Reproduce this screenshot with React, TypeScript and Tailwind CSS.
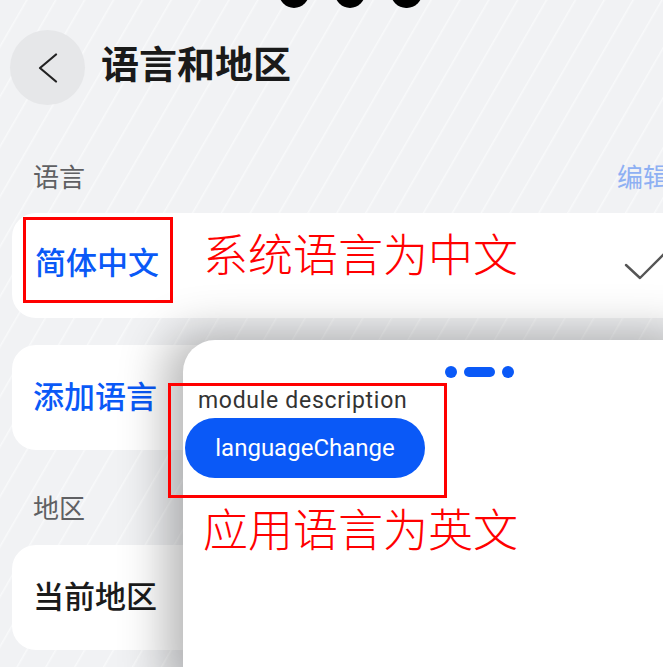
import React from 'react';

function BackIcon() {
  return (
    <svg width="20" height="30" viewBox="0 0 20 30" fill="none">
      <polyline
        points="18,1.5 2,15 18,28.5"
        stroke="#222"
        strokeWidth="2.2"
        strokeLinecap="round"
        strokeLinejoin="round"
      />
    </svg>
  );
}

function CheckIcon() {
  return (
    <svg width="46" height="32" viewBox="0 0 46 32" fill="none">
      <polyline
        points="4,15 18,28 46,0"
        stroke="#555"
        strokeWidth="2.4"
        strokeLinecap="round"
        strokeLinejoin="round"
      />
    </svg>
  );
}

function App() {
  return (
    <div className="relative w-[663px] h-[667px] overflow-hidden bg-[#f1f2f4] bg-[repeating-linear-gradient(120deg,#f1f2f4_0px,#f1f2f4_22px,#f8f9fa_23px,#f1f2f4_25px)] font-['Roboto','Noto_Sans_CJK_SC',sans-serif]">
      {/* top dots */}
      <div className="flex items-end gap-[26px] h-[8px] pl-[279px]">
        <div className="w-[30px] h-[30px] shrink-0 rounded-full bg-black" />
        <div className="w-[30px] h-[30px] shrink-0 rounded-full bg-black" />
        <div className="w-[31px] h-[30px] shrink-0 rounded-full bg-black" />
      </div>

      {/* header */}
      <div className="flex items-center mt-[22px] pl-[10px]">
        <div className="w-[75px] h-[75px] rounded-full bg-[#e6e7e9] flex items-center justify-center">
          <BackIcon />
        </div>
        <div className="ml-[16px] pb-[5px] text-[38px] leading-none font-bold text-[#1a1a1a]">
          语言和地区
        </div>
      </div>

      {/* language section */}
      <div className="flex justify-between w-[669px] mt-[60px] pl-[33px] text-[26px] leading-none">
        <span className="text-[#5f6063]">语言</span>
        <span className="text-[#8eb0f3]">编辑</span>
      </div>

      <div className="flex items-start ml-[12px] mt-[22px] w-[700px] h-[105px] rounded-[24px] bg-white pl-[11px]">
        <div className="mt-[4px] w-[150px] h-[86px] border-[3px] border-[#ff0000] flex items-center pl-[9px] pt-[7px] text-[31px] leading-none font-medium text-[#0a59f7]">
          简体中文
        </div>
        <div className="ml-[30px] mt-[21px] text-[45px] leading-none font-light text-[#ff0000]">
          系统语言为中文
        </div>
        <div className="ml-[104px] mt-[37px]">
          <CheckIcon />
        </div>
      </div>

      <div className="flex items-center ml-[12px] mt-[27px] w-[700px] h-[105px] rounded-[24px] bg-white pl-[21px] text-[31px] leading-none font-medium text-[#0a59f7]">
        添加语言
      </div>

      {/* region section */}
      <div className="mt-[46px] pl-[33px] text-[26px] leading-none text-[#5f6063]">地区</div>

      <div className="flex items-center ml-[12px] mt-[23px] w-[700px] h-[105px] rounded-[24px] bg-white pl-[21px] text-[31px] leading-none font-medium text-[#1b1b1b]">
        当前地区
      </div>

      {/* module sheet */}
      <div className="absolute left-[183px] top-[340px] w-[520px] h-[360px] rounded-tl-[32px] bg-white shadow-[-16px_-6px_48px_rgba(0,0,0,0.3)]">
        <div className="flex items-center gap-[7px] ml-[262px] mt-[26px]">
          <div className="w-[12px] h-[12px] rounded-full bg-[#0a59f7]" />
          <div className="w-[31px] h-[10px] rounded-full bg-[#0a59f7]" />
          <div className="w-[12px] h-[12px] rounded-full bg-[#0a59f7]" />
        </div>

        <div className="-ml-[15px] mt-[5px] w-[279px] h-[115px] border-[3px] border-[#ff0000] pt-[1px] pl-[14px]">
          <div className="pl-[13px] text-[23px] leading-[28px] tracking-[0.7px] text-[#333]">
            module description
          </div>
          <div className="mt-[3px] w-[240px] h-[60px] rounded-full bg-[#0a59f7] flex items-center justify-center text-[24px] font-normal text-white">
            languageChange
          </div>
        </div>

        <div className="ml-[20px] mt-[11px] text-[45px] leading-none font-light text-[#ff0000]">
          应用语言为英文
        </div>
      </div>
    </div>
  );
}

export default App;
